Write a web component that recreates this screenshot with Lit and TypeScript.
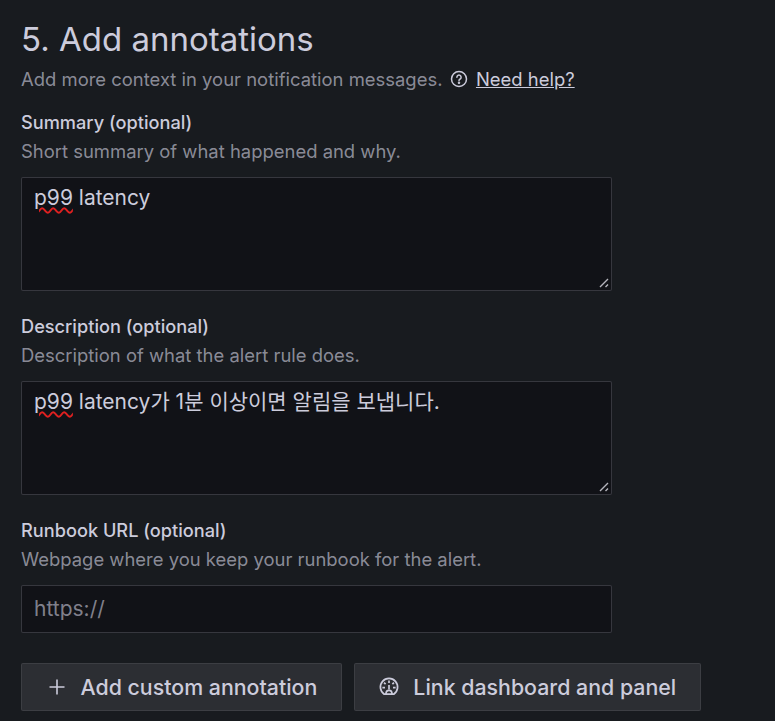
import { html, LitElement, css } from 'lit';
import { customElement } from 'lit/decorators.js';

const fields = [
  { label: 'Summary (optional)', desc: 'Short summary of what happened and why.', word: 'p99', rest: ' latency' },
  { label: 'Description (optional)', desc: 'Description of what the alert rule does.', word: 'p99', rest: ' latency가 1분 이상이면 알림을 보냅니다.' },
];

@customElement('app-root')
export default class AppRoot extends LitElement {
  static styles = [
    css`
      :host {
        display: block;
        width: 775px;
        height: 721px;
        overflow: hidden;
        box-sizing: border-box;
        background: #181b1f;
        color: #ccccdc;
        font-family: Inter, 'Noto Sans CJK KR', sans-serif;
      }
      #wrapper {
        display: flex;
        flex-direction: column;
        padding: 19px 0 0 21px;
      }
      h1 {
        margin: 0;
        font-size: 33px;
        line-height: 40px;
        font-weight: 400;
        color: #ccccdc;
      }
      .sub {
        display: flex;
        align-items: center;
        margin-top: 9px;
        height: 22px;
        font-size: 18.45px;
        color: rgba(204, 204, 220, 0.65);
      }
      .sub svg {
        margin-left: 8px;
        margin-right: 7.5px;
      }
      .sub a {
        color: #ccccdc;
        text-decoration: underline;
      }
      .field {
        display: flex;
        flex-direction: column;
        width: 591px;
        margin-top: 21px;
      }
      .field + .field {
        margin-top: 24px;
      }
      label {
        font-size: 18.2px;
        line-height: 22px;
        font-weight: 500;
        color: #ccccdc;
      }
      .desc {
        font-size: 18.45px;
        line-height: 22px;
        margin-top: 7px;
        color: rgba(204, 204, 220, 0.65);
      }
      .control {
        box-sizing: border-box;
        margin-top: 15px;
        background: #111217;
        border: 1px solid rgba(204, 204, 220, 0.2);
        border-radius: 2px;
        padding: 6px 12px;
        font-size: 21px;
        line-height: 28px;
        color: #ccccdc;
      }
      .area {
        position: relative;
        height: 114px;
      }
      .area svg {
        position: absolute;
        right: 1px;
        bottom: 1px;
      }
      .typo {
        text-decoration: underline wavy #e02020 1.5px;
        text-underline-offset: 2px;
      }
      .single {
        height: 48px;
        padding: 9px 12px;
        color: rgba(204, 204, 220, 0.6);
      }
      .buttons {
        display: flex;
        gap: 12px;
        margin-top: 30px;
      }
      button {
        display: flex;
        align-items: center;
        box-sizing: border-box;
        height: 48px;
        padding: 0 23.5px 0 24px;
        background: #2c2e33;
        border: 1px solid rgba(204, 204, 220, 0.1);
        border-radius: 2px;
        color: #ccccdc;
        font-family: inherit;
        font-size: 21.35px;
        font-weight: 500;
      }
      button svg {
        margin-right: 14.5px;
      }
    `
  ];

  renderField(f: { label: string; desc: string; word: string; rest: string }) {
    return html`
      <div class="field">
        <label>${f.label}</label>
        <div class="desc">${f.desc}</div>
        <div class="control area">
          <span class="typo">${f.word}</span>${f.rest}
          <svg width="12" height="12" viewBox="0 0 12 12" fill="none" stroke="#b5b5bd" stroke-width="1.4">
            <path d="M2 10L10 2M7.5 10L10 7.5" />
          </svg>
        </div>
      </div>
    `;
  }

  render() {
    return html`
      <div id="wrapper">
        <h1>5. Add annotations</h1>
        <div class="sub">
          <span>Add more context in your notification messages.</span>
          <svg width="18" height="18" viewBox="0 0 18 18" fill="none" stroke="#ccccdc" stroke-width="1.5">
            <circle cx="9" cy="9" r="7.5" />
            <path d="M6.9 7.2a2.1 2.1 0 1 1 3.2 1.8c-.7.4-1.1.8-1.1 1.5" stroke-linecap="round" />
            <circle cx="9" cy="12.7" r="0.5" fill="#ccccdc" />
          </svg>
          <a>Need help?</a>
        </div>
        ${fields.map((f) => this.renderField(f))}
        <div class="field">
          <label>Runbook URL (optional)</label>
          <div class="desc">Webpage where you keep your runbook for the alert.</div>
          <div class="control single">https://</div>
        </div>
        <div class="buttons">
          <button>
            <svg width="20" height="20" viewBox="0 0 20 20" fill="none" stroke="#ccccdc" stroke-width="1.6">
              <path d="M11 2.5V17.5M3.5 10H18.5" />
            </svg>
            Add custom annotation
          </button>
          <button>
            <svg width="20" height="20" viewBox="0 0 20 20" fill="none" stroke="#ccccdc" stroke-width="1.7">
              <path d="M5.2 17.2a8.6 8.6 0 1 1 9.6 0Z" />
              <path d="M10 3.4V6M5 5.6l1.6 1.6M15 5.6l-1.6 1.6M3.4 10.6H6M16.6 10.6H14" />
              <path d="M10 8v4.5" />
              <path d="M7 17c0-2.4 1.3-3.6 3-3.6s3 1.2 3 3.6" />
            </svg>
            Link dashboard and panel
          </button>
        </div>
      </div>
    `;
  }
}
